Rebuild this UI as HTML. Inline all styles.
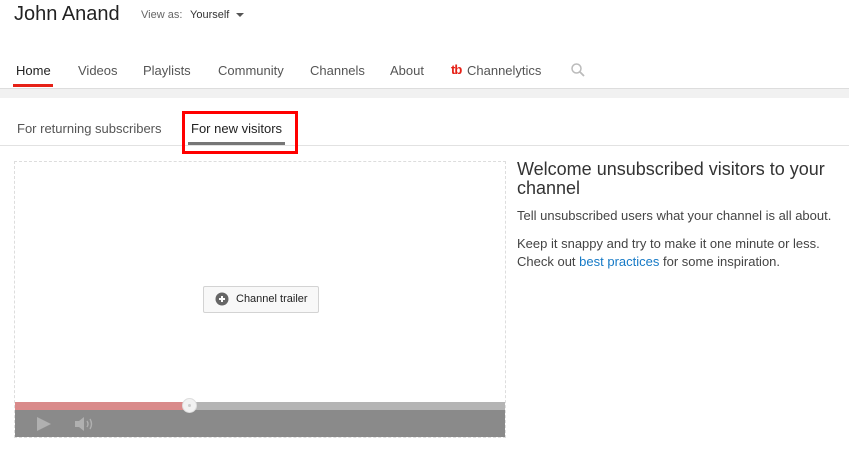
<!DOCTYPE html>
<html><head><meta charset="utf-8"><style>
*{margin:0;padding:0;box-sizing:border-box}
body{width:849px;height:452px;background:#fff;font-family:"Liberation Sans",sans-serif;position:relative;overflow:hidden;color:#333}
.a{position:absolute;white-space:nowrap}
.nav{font-size:13px;color:#555;top:63px}
</style></head><body>
<div class="a" style="left:14px;top:3px;font-size:20px;color:#222">John Anand</div>
<div class="a" style="left:141px;top:9px;font-size:11px;color:#666">View as:</div>
<div class="a" style="left:190px;top:9px;font-size:11px;color:#333">Yourself</div>
<div class="a" style="left:236px;top:13px;width:0;height:0;border-left:4px solid transparent;border-right:4px solid transparent;border-top:4px solid #555"></div>

<div class="a nav" style="left:16px;color:#222">Home</div>
<div class="a" style="left:13px;top:84px;width:40px;height:3px;background:#e62117"></div>
<div class="a nav" style="left:78px">Videos</div>
<div class="a nav" style="left:143px">Playlists</div>
<div class="a nav" style="left:218px">Community</div>
<div class="a nav" style="left:310px">Channels</div>
<div class="a nav" style="left:390px">About</div>
<div class="a nav" style="left:451px;color:#e62117;font-weight:bold;letter-spacing:-1px;top:62px">tb</div>
<div class="a nav" style="left:467px">Channelytics</div>
<svg class="a" style="left:570px;top:62px" width="16" height="16" viewBox="0 0 16 16"><circle cx="6.5" cy="6.5" r="4.5" fill="none" stroke="#bbb" stroke-width="1.5"/><path d="M10 10 L14 14" stroke="#bbb" stroke-width="1.8"/></svg>

<div class="a" style="left:0;top:88px;width:849px;height:10px;background:#f1f1f1;border-top:1px solid #ddd"></div>

<div class="a" style="left:17px;top:121px;font-size:13px;color:#555">For returning subscribers</div>
<div class="a" style="left:191px;top:121px;font-size:13px;color:#222">For new visitors</div>
<div class="a" style="left:0;top:145px;width:849px;height:1px;background:#e2e2e2"></div>
<div class="a" style="left:188px;top:142px;width:97px;height:3px;background:#767676"></div>
<div class="a" style="left:182px;top:111px;width:116px;height:43px;border:3px solid #f00"></div>

<div class="a" style="left:14px;top:161px;width:492px;height:277px;border:1px dashed #ddd"></div>
<div class="a" style="left:15px;top:402px;width:490px;height:8px;background:#b4b4b4"></div>
<div class="a" style="left:15px;top:402px;width:175px;height:8px;background:#d98a8a"></div>
<div class="a" style="left:15px;top:410px;width:490px;height:27px;background:#8a8a8a"></div>
<div class="a" style="left:182px;top:398px;width:15px;height:15px;border-radius:50%;background:#f2f2f2;border:1px solid #ddd"></div>
<div class="a" style="left:188px;top:404px;width:3px;height:3px;border-radius:50%;background:#ccc"></div>
<svg class="a" style="left:36px;top:416px" width="16" height="16"><path d="M1 1 L15 8 L1 15 Z" fill="#b0b0b0"/></svg>
<svg class="a" style="left:74px;top:416px" width="22" height="16"><path d="M1 5 H5 L10 1 V15 L5 11 H1 Z" fill="#b0b0b0"/><path d="M13 5 Q15 8 13 11 M16 3 Q19 8 16 13" stroke="#b0b0b0" stroke-width="1.4" fill="none"/></svg>

<div class="a" style="left:203px;top:286px;width:116px;height:27px;background:#f8f8f8;border:1px solid #d3d3d3;border-radius:2px"></div>
<svg class="a" style="left:215px;top:292px" width="14" height="14"><circle cx="7" cy="7" r="6.5" fill="#666"/><path d="M7 4 V10 M4 7 H10" stroke="#fff" stroke-width="2"/></svg>
<div class="a" style="left:236px;top:293px;font-size:11px;color:#222">Channel trailer</div>

<div class="a" style="left:517px;top:160px;font-size:18px;line-height:19px;color:#333;white-space:normal;width:320px">Welcome unsubscribed visitors to your channel</div>
<div class="a" style="left:517px;top:208px;font-size:13px;color:#444">Tell unsubscribed users what your channel is all about.</div>
<div class="a" style="left:517px;top:236px;font-size:13px;color:#444">Keep it snappy and try to make it one minute or less.</div>
<div class="a" style="left:517px;top:254px;font-size:13px;color:#444">Check out <span style="color:#167ac6">best practices</span> for some inspiration.</div>
</body></html>
